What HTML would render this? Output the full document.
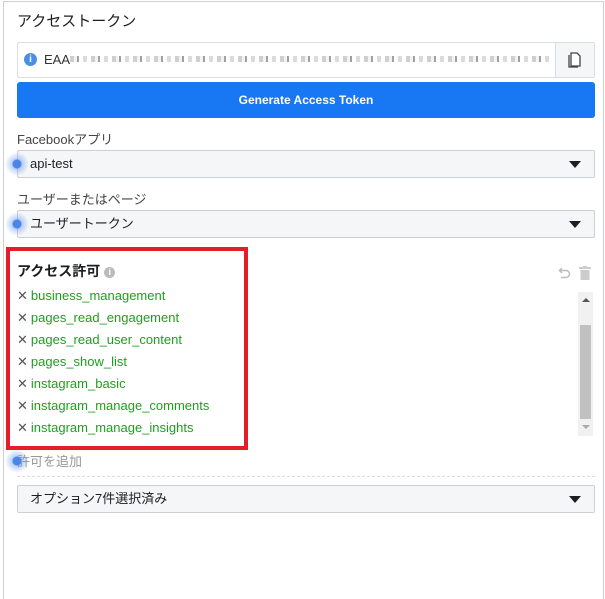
<!DOCTYPE html>
<html><head><meta charset="utf-8"><style>
*{box-sizing:border-box;margin:0;padding:0}
html,body{width:605px;height:599px;overflow:hidden}
body{background:#fff;font-family:"Liberation Sans","Noto Sans CJK JP",sans-serif;position:relative;color:#1c1e21}
.frame{position:absolute;left:3px;top:1px;width:601px;height:598px;border:1px solid #ccd0d5;border-bottom:none}
.abs{position:absolute}
.sel{position:absolute;left:17px;width:578px;height:28px;background:#f5f6f7;border:1px solid #ccd0d5;border-radius:2px;font-size:13px;line-height:26px;padding-left:12px}
.tri{position:absolute;right:13px;top:10px;width:0;height:0;border-left:6px solid transparent;border-right:6px solid transparent;border-top:7px solid #1c1e21}
.dot{position:absolute;left:5px;width:24px;height:24px;border-radius:50%;background:radial-gradient(circle,#4a86e8 0 4px,rgba(90,140,240,.4) 5px,rgba(90,140,240,0) 12px)}
.perm{position:absolute;left:17px;font-size:13px;color:#1e9e1e;height:22px;line-height:22px}
.perm span{color:#555;margin-right:3px;font-size:13px}
</style></head><body>
<div class="frame"></div>
<div class="abs" style="left:17px;top:10px;font-size:15px;">アクセストークン</div>
<div class="abs" style="left:17px;top:42px;width:578px;height:36px;border:1px solid #dadde1;border-radius:2px;"></div>
<div class="abs" style="left:555px;top:43px;width:39px;height:34px;background:#f5f6f7;border-left:1px solid #dadde1"></div>
<svg class="abs" style="left:566px;top:50px" width="18" height="20" viewBox="0 0 18 20"><path d="M5 3h6l3 3v10H5z" fill="#fff" stroke="#444" stroke-width="1.3"/><path d="M3 5v12h9" fill="none" stroke="#444" stroke-width="1.3"/></svg>
<div class="abs" style="left:24px;top:53px;width:13px;height:13px;border-radius:50%;background:#4a90e2;color:#fff;font-size:10px;line-height:13px;text-align:center;font-weight:bold">i</div>
<div class="abs" style="left:44px;top:52px;font-size:13px;color:#333">EAA</div>
<div class="abs" style="left:70px;top:56px;width:480px;height:6px;background:repeating-linear-gradient(90deg,#bbb 0 4px,#eee 4px 7px,#777 7px 9px,#fff 9px 13px,#ccc 13px 17px,#fff 17px 21px);opacity:.7"></div>
<div class="abs" style="left:17px;top:82px;width:578px;height:36px;background:#1877f2;border-radius:3px;color:#fff;font-weight:bold;font-size:12px;line-height:36px;text-align:center">Generate Access Token</div>
<div class="abs" style="left:17px;top:129px;font-size:13px;color:#444">Facebookアプリ</div>
<div class="sel" style="top:150px">api-test<div class="tri"></div></div>
<div class="dot" style="top:152px"></div>
<div class="abs" style="left:17px;top:189px;font-size:13px;color:#444">ユーザーまたはページ</div>
<div class="sel" style="top:210px">ユーザートークン<div class="tri"></div></div>
<div class="dot" style="top:212px"></div>
<div class="abs" style="left:6px;top:247px;width:242px;height:203px;border:4px solid #e41e26"></div>
<div class="abs" style="left:17px;top:261px;font-size:14px;font-weight:bold">アクセス許可 <span style="display:inline-block;width:11px;height:11px;border-radius:50%;background:#bbb;color:#fff;font-size:9px;line-height:11px;text-align:center;vertical-align:1px">i</span></div>
<svg class="abs" style="left:558px;top:266px" width="14" height="14" viewBox="0 0 14 14"><path d="M4 2L1.5 4.5 4 7M1.5 4.5H8a3.5 3.5 0 0 1 0 7H3" fill="none" stroke="#bbb" stroke-width="1.5"/></svg>
<svg class="abs" style="left:579px;top:266px" width="12" height="14" viewBox="0 0 12 14"><rect x="0" y="1" width="12" height="2" fill="#ccc"/><rect x="4" y="0" width="4" height="2" fill="#ccc"/><rect x="1.5" y="4" width="9" height="10" fill="#ccc"/></svg>
<div class="perm" style="top:285px"><span>✕</span>business_management</div>
<div class="perm" style="top:307px"><span>✕</span>pages_read_engagement</div>
<div class="perm" style="top:329px"><span>✕</span>pages_read_user_content</div>
<div class="perm" style="top:351px"><span>✕</span>pages_show_list</div>
<div class="perm" style="top:373px"><span>✕</span>instagram_basic</div>
<div class="perm" style="top:395px"><span>✕</span>instagram_manage_comments</div>
<div class="perm" style="top:417px"><span>✕</span>instagram_manage_insights</div>
<div class="abs" style="left:578px;top:292px;width:15px;height:144px;background:#f1f1f1"></div>
<div class="abs" style="left:580px;top:325px;width:11px;height:94px;background:#c1c1c1"></div>
<div class="abs" style="left:582px;top:298px;border-left:4px solid transparent;border-right:4px solid transparent;border-bottom:4px solid #555"></div>
<div class="abs" style="left:582px;top:425px;border-left:4px solid transparent;border-right:4px solid transparent;border-top:4px solid #aaa"></div>
<div class="abs" style="left:17px;top:451px;font-size:13px;color:#999">許可を追加</div>
<div class="dot" style="top:449px"></div>
<div class="abs" style="left:17px;top:476px;width:578px;border-top:1px dashed #dadde1"></div>
<div class="sel" style="top:485px">オプション7件選択済み<div class="tri"></div></div>
</body></html>
